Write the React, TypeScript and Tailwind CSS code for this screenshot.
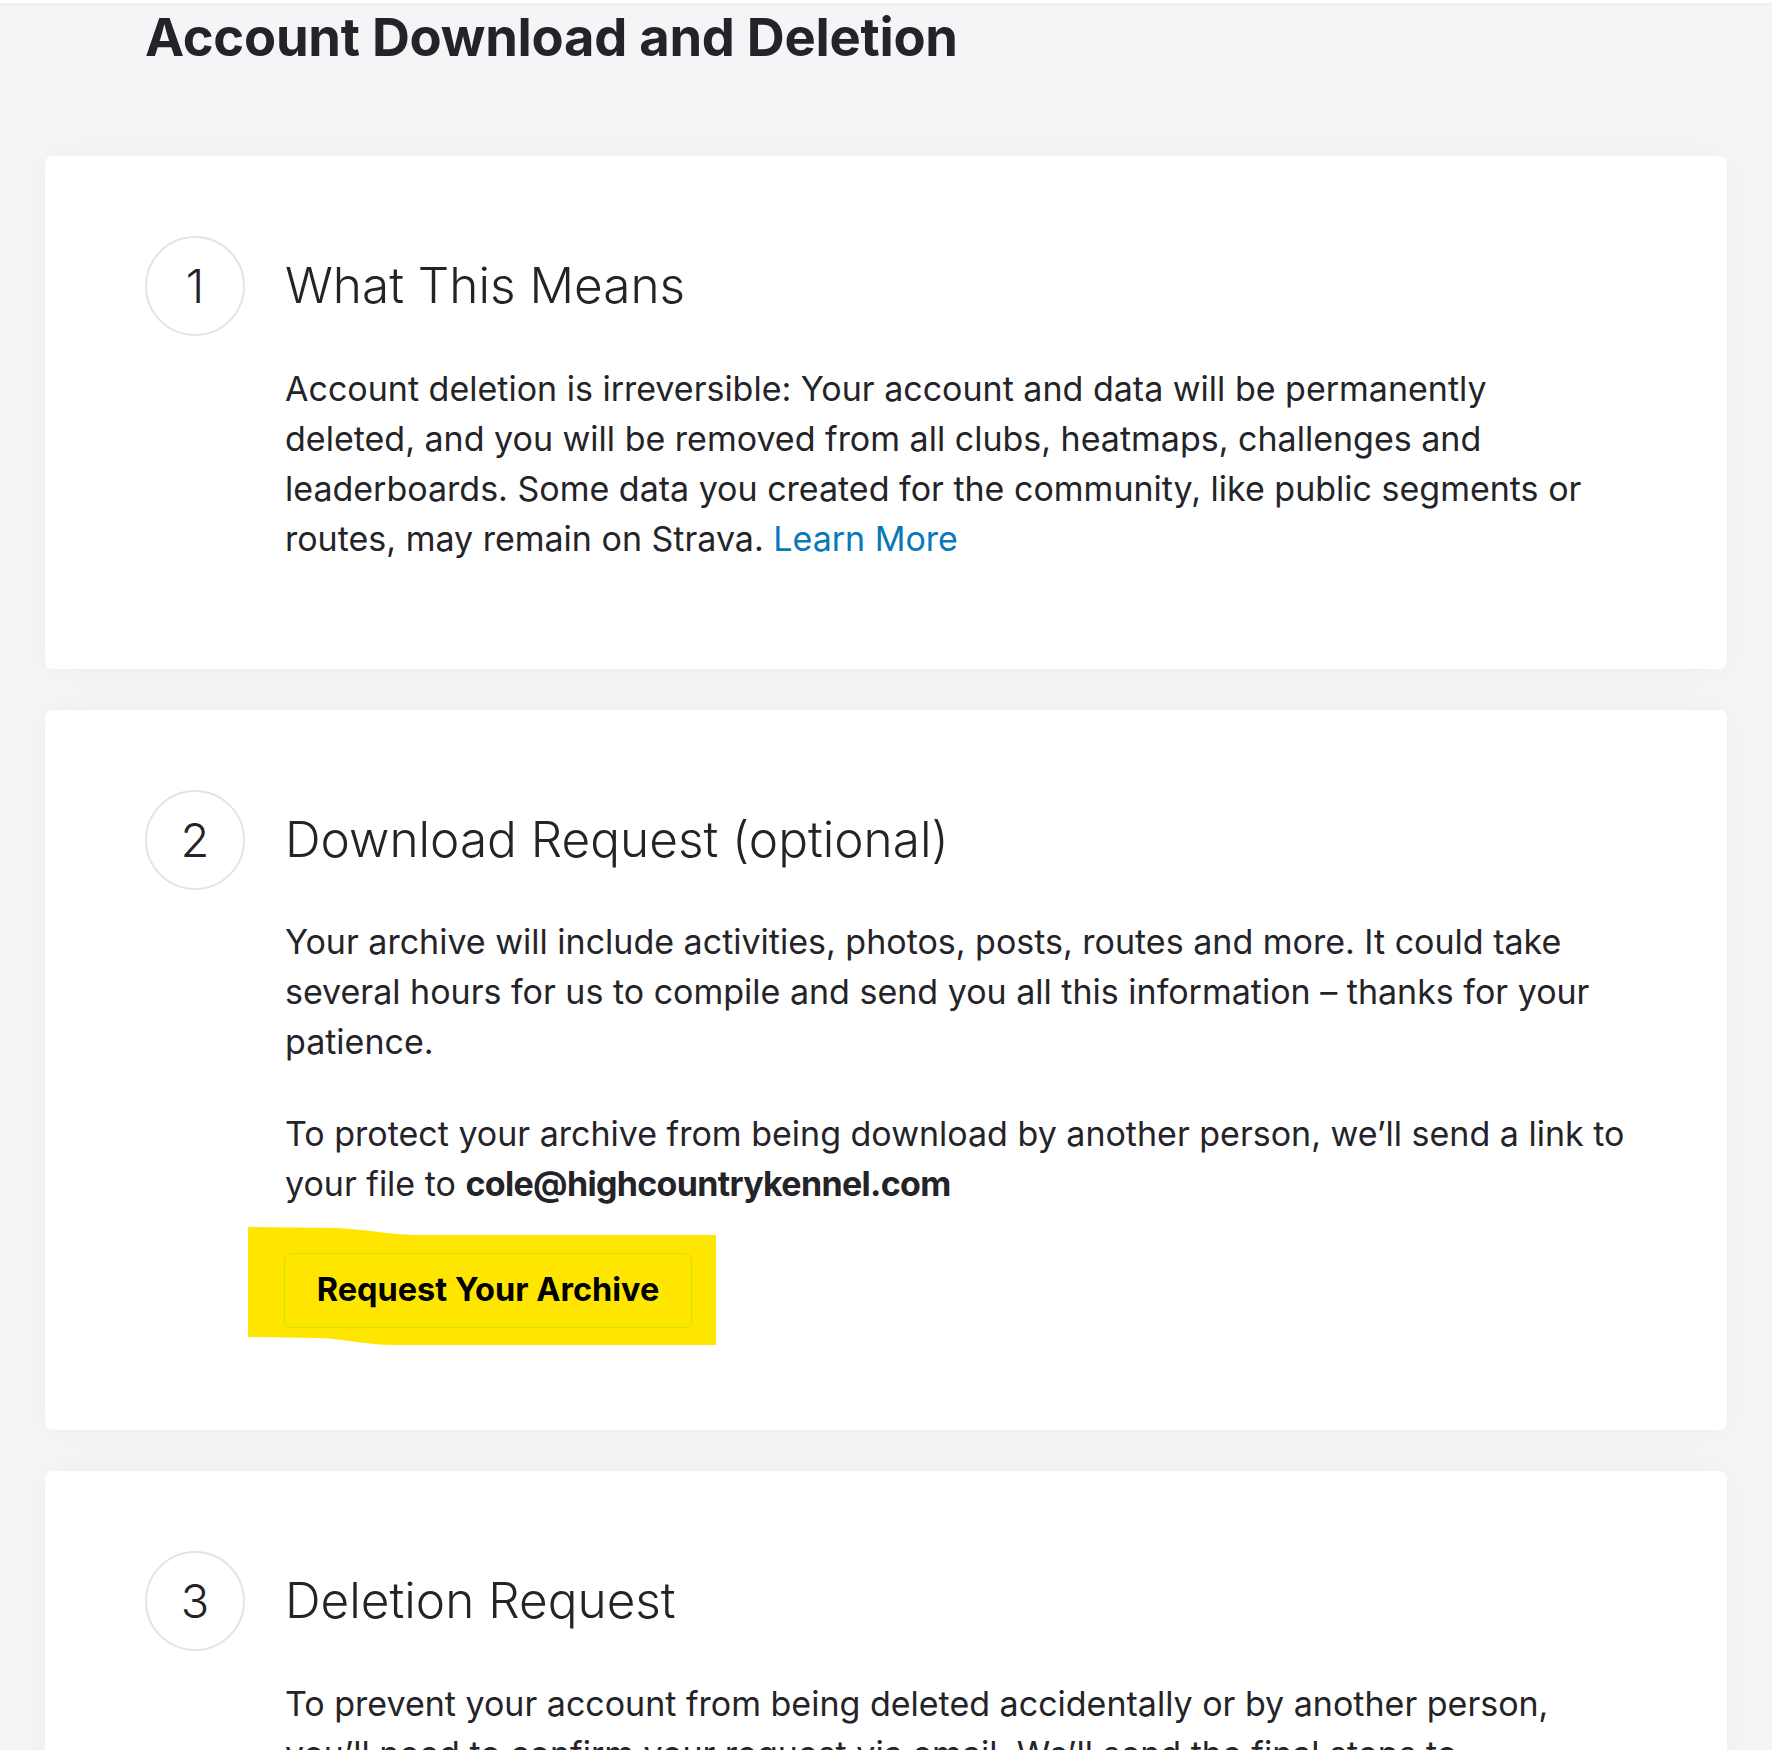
import React from 'react';

const ink = 'text-[#242428]';

function StepCircle({ n }: { n: number }) {
  return (
    <div className="w-[100px] h-[100px] shrink-0 rounded-full border-2 border-[#e3e3ea] flex items-center justify-center">
      <span className={`text-[47px] leading-none font-light ${ink}`}>{n}</span>
    </div>
  );
}

function StepHeader({ n, title }: { n: number; title: string }) {
  return (
    <div className="flex items-center gap-[40px]">
      <StepCircle n={n} />
      <h2 className={`text-[49.5px] leading-none font-light ${ink}`}>{title}</h2>
    </div>
  );
}

function Card({ className, children }: { className: string; children: React.ReactNode }) {
  return (
    <section className={`bg-white rounded-[8px] shadow-[0_0_36px_rgba(20,20,40,0.035)] px-[100px] pt-[80px] ${className}`}>
      {children}
    </section>
  );
}

export default function App() {
  return (
    <div
      className="h-[1750px] overflow-hidden bg-[#f5f5f7]"
      style={{ fontFamily: 'Inter, "Noto Sans", sans-serif' }}
    >
      {/* remnant of the top nav */}
      <div className="h-[3px] bg-white shadow-[0_1px_4px_rgba(0,0,0,0.06)]" />

      <h1 className={`pl-[145px] pt-[8px] text-[52.5px] leading-none font-bold tracking-[-0.005em] ${ink}`}>
        Account Download and Deletion
      </h1>

      <div className="mx-[45px] mt-[92px] flex flex-col gap-[41px]">
        <Card className="pb-[104px] h-[513px]">
          <StepHeader n={1} title="What This Means" />
          <p className={`pl-[140px] mt-[28px] text-[34px] leading-[50px] ${ink}`}>
            Account deletion is irreversible: Your account and data will be permanently
            <br />
            deleted, and you will be removed from all clubs, heatmaps, challenges and
            <br />
            leaderboards. Some data you created for the community, like public segments or
            <br />
            routes, may remain on Strava. <a className="text-[#0a78b8]" href="#">Learn More</a>
          </p>
        </Card>

        <Card className="pb-[100px] h-[720px]">
          <StepHeader n={2} title="Download Request (optional)" />
          <div className="pl-[140px] mt-[27px] flex flex-col items-start">
            <p className={`text-[34px] leading-[50px] ${ink}`}>
              Your archive will include activities, photos, posts, routes and more. It could take
              <br />
              several hours for us to compile and send you all this information – thanks for your
              <br />
              patience.
            </p>
            <p className={`mt-[42px] text-[34px] leading-[50px] ${ink}`}>
              To protect your archive from being download by another person, we’ll send a link to
              <br />
              your file to <span className="font-bold tracking-[-0.02em]">cole@highcountrykennel.com</span>
            </p>
            <div className="relative mt-[44px] -ml-[1px]">
              {/* marker highlight drawn over the screenshot */}
              <svg
                className="absolute left-[-36px] top-[-26px]"
                width="468"
                height="118"
                viewBox="0 0 468 118"
              >
                <path
                  d="M0 0 L90 1 C125 3 140 8 175 8 L468 8 L468 118 L150 118 C115 118 100 112 70 111 L0 110 Z"
                  fill="#ffe600"
                />
              </svg>
              <button className="relative w-[408px] h-[75px] rounded-[7px] border border-[#d7df00] text-[32.5px] font-bold text-black">
                Request Your Archive
              </button>
            </div>
          </div>
        </Card>

        <Card className="pb-[100px]">
          <StepHeader n={3} title="Deletion Request" />
          <p className={`pl-[140px] mt-[28px] text-[34px] leading-[50px] ${ink}`}>
            To prevent your account from being deleted accidentally or by another person,
            <br />
            you’ll need to confirm your request via email. We’ll send the final steps to
            <br />
            <span className="font-bold tracking-[-0.02em]">cole@highcountrykennel.com</span>.
          </p>
        </Card>
      </div>
    </div>
  );
}
